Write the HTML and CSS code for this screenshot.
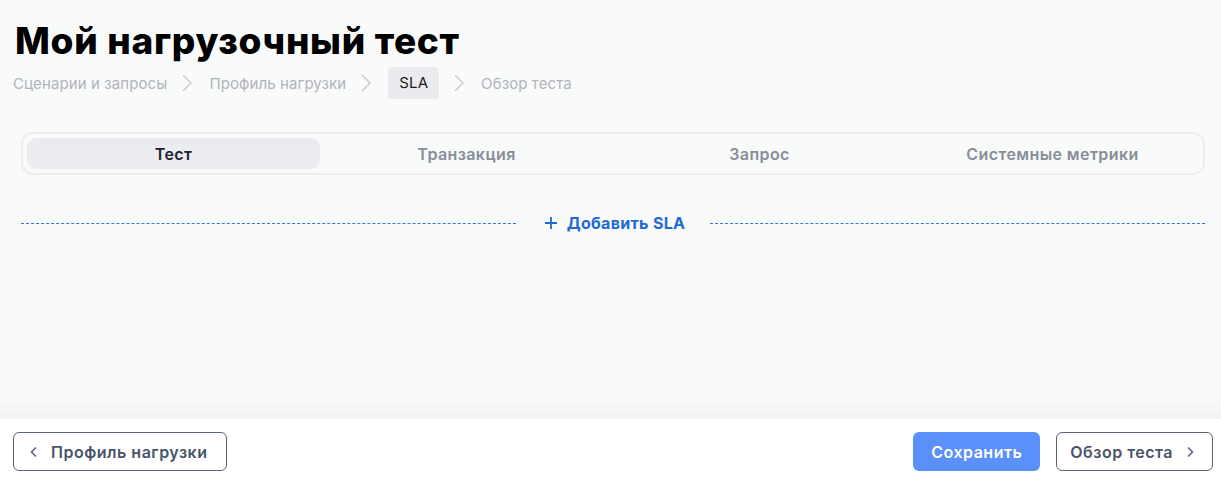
FILE: index.html
```html
<!DOCTYPE html>
<html lang="ru">

<head>
    <meta charset="UTF-8">
    <meta name="viewport" content="width=device-width, initial-scale=1.0">
    <title>Мой нагрузочный тест - SLA</title>
    <link rel="stylesheet" href="styles.css">
</head>

<body>
    <div class="page">
        <div class="content">
            <h1 class="title">Мой нагрузочный тест</h1>
            <div class="crumbs">
                <span class="crumb">Сценарии и запросы</span>
                <svg class="sep" width="20" height="20" viewBox="0 0 20 20"><path d="M5 2l8 8-8 8" fill="none" stroke="#c8cbd1" stroke-width="1.5"/></svg>
                <span class="crumb">Профиль нагрузки</span>
                <svg class="sep" width="20" height="20" viewBox="0 0 20 20"><path d="M5 2l8 8-8 8" fill="none" stroke="#c8cbd1" stroke-width="1.5"/></svg>
                <span class="crumb active">SLA</span>
                <svg class="sep" width="20" height="20" viewBox="0 0 20 20"><path d="M5 2l8 8-8 8" fill="none" stroke="#c8cbd1" stroke-width="1.5"/></svg>
                <span class="crumb">Обзор теста</span>
            </div>

            <div class="tabs">
                <div class="tab active">Тест</div>
                <div class="tab">Транзакция</div>
                <div class="tab">Запрос</div>
                <div class="tab">Системные метрики</div>
            </div>

            <div class="add-row">
                <div class="dash"></div>
                <button class="add">
                    <svg width="14" height="14" viewBox="0 0 14 14"><path d="M7 1v12M1 7h12" stroke="#1f6bd6" stroke-width="1.8"/></svg>
                    Добавить SLA
                </button>
                <div class="dash"></div>
            </div>
        </div>

        <div class="footer">
            <button class="btn outline back">
                <svg width="16" height="16" viewBox="0 0 16 16"><path d="M10 3.5L5.5 8l4.5 4.5" fill="none" stroke="#5a6478" stroke-width="1.6"/></svg>
                Профиль нагрузки
            </button>
            <div class="right">
                <button class="btn primary">Сохранить</button>
                <button class="btn outline next">
                    Обзор теста
                    <svg width="16" height="16" viewBox="0 0 16 16"><path d="M6 3.5L10.5 8 6 12.5" fill="none" stroke="#5a6478" stroke-width="1.6"/></svg>
                </button>
            </div>
        </div>
    </div>
</body>

</html>
```

FILE: styles.css
```css
* {
    box-sizing: border-box;
}

body {
    margin: 0;
    padding: 0;
    background-color: #f9fafa;
    font-family: Inter, "Noto Sans", sans-serif;
    overflow: hidden;
}

.page {
    height: 484px;
    display: flex;
    flex-direction: column;
}

.content {
    flex: 1;
    padding: 0 16px 0 13px;
}

.title {
    margin: 20px 0 0 2px;
    font-size: 37px;
    font-weight: 800;
    line-height: 41px;
    color: #000;
    letter-spacing: 0.7px;
}

.crumbs {
    display: flex;
    align-items: center;
    margin-top: 6px;
    height: 32px;
}

.crumb {
    font-size: 15px;
    color: #b0b4bc;
    letter-spacing: 0.1px;
}

.crumb.active {
    background-color: #ebebef;
    color: #1a1a1a;
    border-radius: 4px;
    padding: 0 11px;
    line-height: 32px;
}

.sep {
    margin: 0 11px;
}

.tabs {
    margin: 33px 0 0 8px;
    border: 2px solid #ebedf0;
    border-radius: 12px;
    padding: 4px;
    display: flex;
    height: 43px;
}

.tab {
    flex: 1;
    display: flex;
    align-items: center;
    justify-content: center;
    font-size: 16px;
    font-weight: 600;
    color: #878e99;
    border-radius: 9px;
    letter-spacing: 0.4px;
}

.tab.active {
    background-color: #ebecf0;
    color: #1c2230;
}

.add-row {
    display: flex;
    align-items: center;
    margin: 33px 0 0 8px;
}

.dash {
    flex: 1;
    border-top: 1px dashed #3a78d8;
}

.add {
    background: none;
    border: none;
    display: flex;
    align-items: center;
    gap: 9px;
    font-family: inherit;
    font-size: 16px;
    font-weight: 700;
    color: #1f6bd6;
    padding: 0 25px 0 28px;
    height: 30px;
    letter-spacing: 0.3px;
    cursor: pointer;
}

.footer {
    height: 65px;
    background-color: #fff;
    display: flex;
    align-items: flex-start;
    justify-content: space-between;
    padding: 13px 8px 0 13px;
    position: relative;
}

.footer::before {
    content: "";
    position: absolute;
    left: 0;
    right: 0;
    top: -20px;
    height: 20px;
    background: linear-gradient(to bottom, rgba(240, 241, 242, 0), #f1f2f3);
}

.right {
    display: flex;
    gap: 16px;
}

.btn {
    height: 39px;
    border-radius: 6px;
    font-family: inherit;
    font-size: 16px;
    font-weight: 600;
    display: flex;
    align-items: center;
    gap: 9px;
    letter-spacing: 0.5px;
    cursor: pointer;
}

.btn.outline {
    background-color: #fff;
    border: 1px solid #5a6478;
    color: #4a5466;
}

.btn.back {
    padding: 0 18px 0 12px;
}

.btn.next {
    padding: 0 14px 0 13px;
    gap: 9px;
}

.btn.primary {
    background-color: #5b8ff9;
    border: none;
    color: #fff;
    padding: 0 18px;
}
```
